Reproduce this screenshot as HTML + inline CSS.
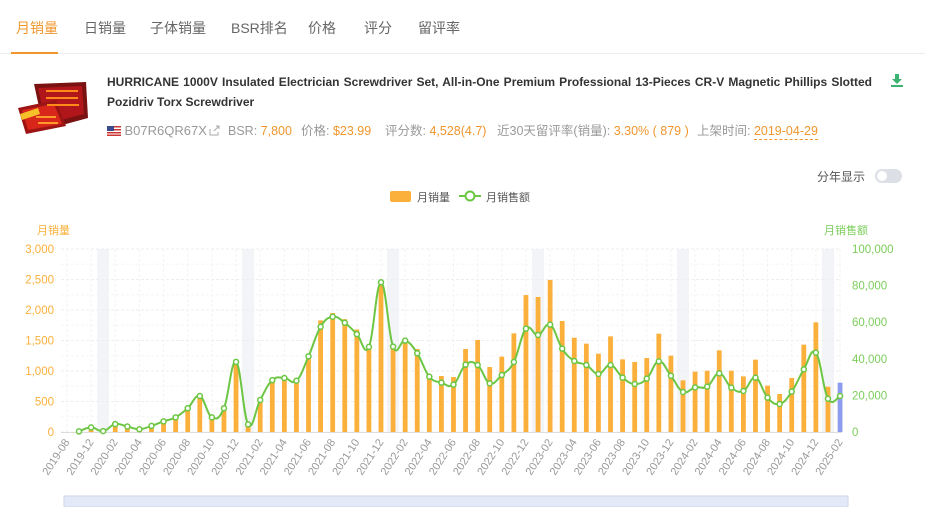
<!DOCTYPE html>
<html><head><meta charset="utf-8">
<style>
*{margin:0;padding:0;box-sizing:border-box}
body{width:925px;height:507px;overflow:hidden;background:#fff;font-family:"Liberation Sans","Noto Sans CJK SC",sans-serif;position:relative;color:#333}
.abs{position:absolute;white-space:nowrap}
.tab{position:absolute;top:18px;font-size:14px;color:#666}
.g{color:#999}.o{color:#f0962d}
.info{position:absolute;top:123px;font-size:12.5px;line-height:16px;white-space:nowrap}
</style></head><body>
<div class="tab" style="left:16px;color:#f0962d">月销量</div>
<div class="tab" style="left:84px">日销量</div>
<div class="tab" style="left:150px">子体销量</div>
<div class="tab" style="left:231px">BSR排名</div>
<div class="tab" style="left:308px">价格</div>
<div class="tab" style="left:364px">评分</div>
<div class="tab" style="left:418px">留评率</div>
<div class="abs" style="left:0;top:53px;width:925px;height:1px;background:#ececec"></div>
<div class="abs" style="left:11px;top:52px;width:47px;height:2px;background:#f0962d"></div>

<svg class="abs" style="left:16px;top:78px" width="74" height="60" viewBox="0 0 74 60">
<path d="M18 6 L70 4 L72 40 L28 52 Z" fill="#7a1212"/>
<path d="M22 10 L66 8 L68 36 L30 46 Z" fill="#b0161a"/>
<path d="M2 30 L40 22 L50 48 L10 56 Z" fill="#9c1414"/>
<path d="M6 32 L38 26 L46 46 L12 52 Z" fill="#d8261a"/>
<rect x="30" y="12" width="32" height="2" fill="#ff8a1a"/><rect x="30" y="19" width="32" height="2" fill="#ff8a1a"/><rect x="31" y="26" width="32" height="2" fill="#ff8a1a"/>
<path d="M4 36 L22 30 L24 36 L6 42 Z" fill="#f5c02a"/>
<rect x="20" y="38" width="20" height="2" fill="#ff9a2a"/><rect x="22" y="44" width="20" height="2" fill="#ff9a2a"/>
</svg>

<div class="abs" style="left:107px;top:72px;width:765px;font-size:12px;font-weight:bold;line-height:20px;text-align:justify;text-align-last:left;white-space:normal;color:#333">HURRICANE 1000V Insulated Electrician Screwdriver Set, All-in-One Premium Professional 13-Pieces CR-V Magnetic Phillips Slotted Pozidriv Torx Screwdriver</div>
<svg class="abs" style="left:890px;top:73px" width="14" height="14" viewBox="0 0 14 14"><path d="M5 1h4v5h3L7 11 2 6h3z" fill="#3cb371"/><rect x="1" y="12" width="12" height="2" fill="#3cb371"/></svg>

<div class="info" style="left:107px">
<svg width="14" height="10" style="vertical-align:-1px"><rect width="14" height="10" fill="#fff"/><rect y="0" width="14" height="1.5" fill="#c33"/><rect y="3" width="14" height="1.5" fill="#c33"/><rect y="6" width="14" height="1.5" fill="#c33"/><rect y="8.5" width="14" height="1.5" fill="#c33"/><rect width="7" height="5" fill="#3b4a8a"/></svg>
<span class="g" style="font-size:13px">B07R6QR67X</span><svg width="12" height="11" style="margin-left:2px;vertical-align:-1px"><path d="M1 4v6h8V7M5 6l5-5M7 1h3v3" stroke="#aaa" fill="none"/></svg></div>
<div class="info" style="left:228px"><span class="g">BSR: </span><span class="o">7,800</span></div>
<div class="info" style="left:301px"><span class="g">价格: </span><span class="o">$23.99</span></div>
<div class="info" style="left:385px"><span class="g">评分数: </span><span class="o">4,528(4.7)</span></div>
<div class="info" style="left:497px"><span class="g">近30天留评率(销量): </span><span class="o">3.30% ( 879 )</span></div>
<div class="info" style="left:697px"><span class="g">上架时间: </span><span class="o" style="border-bottom:1px dashed #f0962d;padding-bottom:1px">2019-04-29</span></div>

<div class="abs" style="left:817px;top:168px;font-size:12px;color:#555">分年显示</div>
<div class="abs" style="left:875px;top:169px;width:27px;height:14px;border-radius:7px;background:#dcdfe6"><div style="position:absolute;left:2px;top:2px;width:10px;height:10px;border-radius:5px;background:#fff"></div></div>

<svg class="abs" style="left:0;top:0" width="925" height="507" id="ch">
<rect x="390" y="191" width="21" height="11" rx="2" fill="#fbb03b"/>
<text x="417" y="201" font-size="11" fill="#555" font-family="Liberation Sans,Noto Sans CJK SC,sans-serif">月销量</text>
<line x1="459" y1="196" x2="481" y2="196" stroke="#6cc644" stroke-width="2"/><circle cx="470" cy="196" r="4.5" fill="#fff" stroke="#6cc644" stroke-width="2"/>
<text x="486" y="201" font-size="11" fill="#555" font-family="Liberation Sans,Noto Sans CJK SC,sans-serif">月销售额</text>
<text x="37" y="234" font-size="11" fill="#fbb03b" font-family="Liberation Sans,Noto Sans CJK SC,sans-serif">月销量</text>
<text x="824" y="234" font-size="11" fill="#7ccd5b" font-family="Liberation Sans,Noto Sans CJK SC,sans-serif">月销售额</text>
<g id="grid"></g>
<rect x="64" y="496" width="784" height="11" fill="#e3e9f7" stroke="#ccd6ee"/>
</svg>
<script>
var bars=[10,80,15,130,90,50,100,180,240,390,590,240,380,1150,130,520,880,900,850,1250,1830,1950,1850,1680,1400,2480,1390,1535,1360,907,918,900,1360,1508,1065,1235,1617,2245,2213,2492,1820,1546,1448,1284,1568,1191,1148,1213,1612,1251,847,989,1005,1339,1005,912,1186,760,623,885,1432,1798,743,809];
var line=[10,75,15,130,90,45,100,175,240,390,590,240,390,1150,125,525,850,885,840,1240,1725,1890,1790,1605,1395,2455,1400,1497,1290,907,809,776,1104,1098,798,934,1148,1694,1590,1760,1366,1164,1098,951,1098,891,787,874,1158,923,656,732,743,962,727,672,891,563,459,661,1027,1301,546,590];
var NS='http://www.w3.org/2000/svg',g=document.getElementById('grid');
function el(t,a,txt){var e=document.createElementNS(NS,t);for(var k in a)e.setAttribute(k,a[k]);if(txt!=null)e.textContent=txt;g.appendChild(e);return e;}
function X(i){return 79+12.08*i}function Y(v){return 432-v*0.061}
var F='Liberation Sans,Noto Sans CJK SC,sans-serif';
[2,14,26,38,50,62].forEach(function(i){el('rect',{x:X(i)-6,y:249,width:12,height:183,fill:'#f2f4f8'})});
for(var k=0;k<=12;k++){var y=249+k*15.25;el('line',{x1:61,x2:840,y1:y,y2:y,stroke:k%2?'#f6f6f6':'#eeeeee','stroke-dasharray':'3,2'})}
var labs=['2019-08'];var xs=[67];
for(var i=1;i<64;i+=2){var m=10+i;var yr=2019+Math.floor(m/12);var mo=m%12+1;labs.push(yr+'-'+(mo<10?'0':'')+mo);xs.push(X(i))}
xs.forEach(function(x,j){el('line',{x1:x,x2:x,y1:249,y2:432,stroke:'#f3f3f3','stroke-dasharray':'3,2'});
el('text',{x:0,y:0,'font-size':11,fill:'#999','font-family':F,'text-anchor':'end',transform:'translate('+(x+3)+',442) rotate(-57)'},labs[j])});
el('line',{x1:61,x2:842,y1:432.5,y2:432.5,stroke:'#ddd'});
for(var k=0;k<=6;k++){var y=432-k*30.5;el('text',{x:54,y:y+4,'font-size':11.5,fill:'#fbb03b','font-family':F,'text-anchor':'end'},(k*500).toLocaleString('en-US'));}
for(var k=0;k<=5;k++){var y=432-k*36.6;el('text',{x:852,y:y+4,'font-size':11.5,fill:'#7ccd5b','font-family':F},(k*20000).toLocaleString('en-US'));}
bars.forEach(function(v,i){el('rect',{x:X(i)-2.4,y:Y(v),width:4.8,height:v*0.061,fill:i==63?'#8e9cf0':'#fbb03b'})});
var p=line.map(function(v,i){return [X(i),Y(v)]});var d='M'+p[0][0]+','+p[0][1];
for(var i=0;i<p.length-1;i++){var p0=p[i-1]||p[i],p1=p[i],p2=p[i+1],p3=p[i+2]||p2,t=0.2;
d+=' C'+(p1[0]+(p2[0]-p0[0])*t)+','+(p1[1]+(p2[1]-p0[1])*t)+' '+(p2[0]-(p3[0]-p1[0])*t)+','+(p2[1]-(p3[1]-p1[1])*t)+' '+p2[0]+','+p2[1];}
el('path',{d:d,fill:'none',stroke:'#6cc644','stroke-width':2});
p.forEach(function(q){el('circle',{cx:q[0],cy:q[1],r:2.5,fill:'#fff',stroke:'#6cc644','stroke-width':1.5})});
</script>
</body></html>
